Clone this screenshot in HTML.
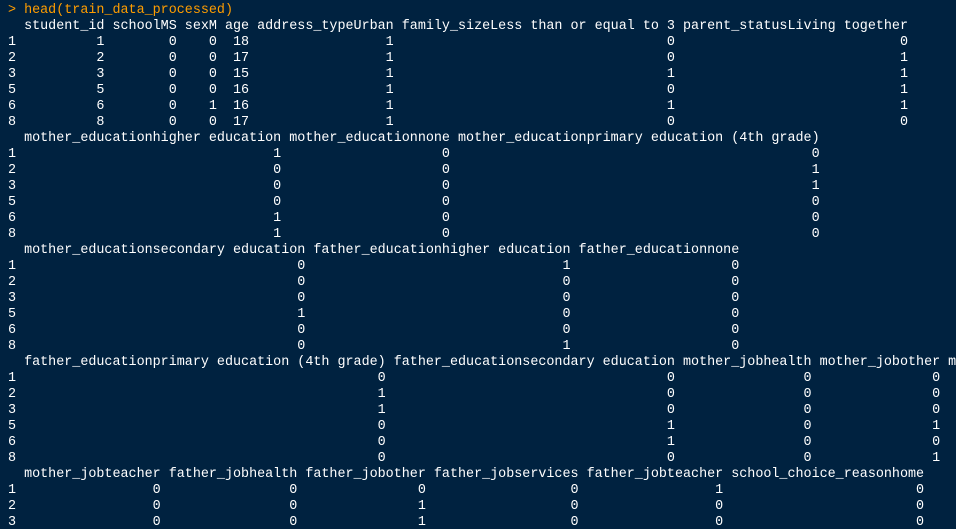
<!DOCTYPE html>
<html><head><meta charset="utf-8"><style>
html,body{margin:0;padding:0;background:#002240;width:956px;height:529px;overflow:hidden}
pre{margin:0;padding:3px 0 0 8px;font-family:"Liberation Mono",monospace;font-size:13.4px;line-height:16px;color:#ffffff;white-space:pre;width:948px;overflow:hidden}
.p{color:#ff9d00}
</style></head><body><pre><span class="p">&gt; head(train_data_processed)</span>
  student_id schoolMS sexM age address_typeUrban family_sizeLess than or equal to 3 parent_statusLiving together
1          1        0    0  18                 1                                  0                            0
2          2        0    0  17                 1                                  0                            1
3          3        0    0  15                 1                                  1                            1
5          5        0    0  16                 1                                  0                            1
6          6        0    1  16                 1                                  1                            1
8          8        0    0  17                 1                                  0                            0
  mother_educationhigher education mother_educationnone mother_educationprimary education (4th grade)
1                                1                    0                                             0
2                                0                    0                                             1
3                                0                    0                                             1
5                                0                    0                                             0
6                                1                    0                                             0
8                                1                    0                                             0
  mother_educationsecondary education father_educationhigher education father_educationnone
1                                   0                                1                    0
2                                   0                                0                    0
3                                   0                                0                    0
5                                   1                                0                    0
6                                   0                                0                    0
8                                   0                                1                    0
  father_educationprimary education (4th grade) father_educationsecondary education mother_jobhealth mother_jobother mother_jobservices
1                                             0                                   0                0               0                  0
2                                             1                                   0                0               0                  0
3                                             1                                   0                0               0                  0
5                                             0                                   1                0               1                  0
6                                             0                                   1                0               0                  0
8                                             0                                   0                0               1                  0
  mother_jobteacher father_jobhealth father_jobother father_jobservices father_jobteacher school_choice_reasonhome
1                 0                0               0                  0                 1                        0
2                 0                0               1                  0                 0                        0
3                 0                0               1                  0                 0                        0
</pre></body></html>
